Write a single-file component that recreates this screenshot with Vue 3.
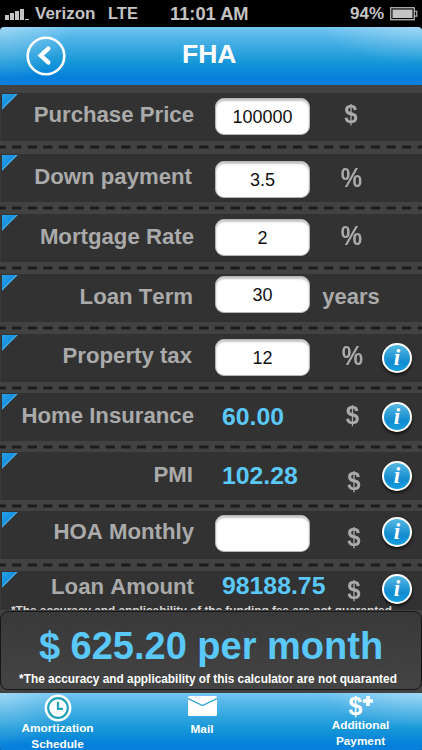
<template>
  <div class="screen">
    <div class="status-bar">
      <div class="signal">
        <i v-for="h in signalBars" :key="h" :style="{ height: h + 'px' }"></i>
        <i class="off"></i>
      </div>
      <span class="carrier">Verizon</span>
      <span class="network">LTE</span>
      <span class="clock">11:01 AM</span>
      <span class="battery-text">94%</span>
      <svg class="battery" width="28" height="14" viewBox="0 0 28 14">
        <rect x="0.75" y="0.75" width="23.5" height="12" fill="none" stroke="#c4c4c4" stroke-width="1.2" />
        <rect x="2.5" y="2.5" width="20" height="8.5" fill="#c4c4c4" />
        <path d="M24.5 4.3h2.3v4.8h-2.3" fill="none" stroke="#c4c4c4" stroke-width="1.1" />
      </svg>
    </div>

    <header class="header">
      <button class="back-btn">
        <svg width="40" height="40" viewBox="0 0 40 40">
          <circle cx="20" cy="20" r="18.3" fill="none" stroke="#fff" stroke-width="2.6" />
          <path d="M22.3 12.6L14.8 19.5l7.5 6.9" fill="none" stroke="#fff" stroke-width="4.4" stroke-linecap="round" />
        </svg>
      </button>
      <h1>FHA</h1>
    </header>

    <main class="rows">
      <div
        v-for="row in rows"
        :key="row.label"
        class="row"
        :style="{ height: row.height + 'px' }"
      >
        <div class="panel">
          <span class="corner"></span>
          <label :style="{ marginTop: row.labelTop + 'px', paddingRight: (row.inset || 0) + 'px' }">{{ row.label }}</label>
          <div class="field" :style="{ marginTop: row.fieldTop + 'px' }">
            <span v-if="row.value" class="value">{{ row.value }}</span>
            <input v-else v-model="row.input" type="text" />
          </div>
          <span
            class="unit"
            :class="{ years: row.unit === 'years', percent: row.unit === '%' }"
            :style="{ marginTop: row.unitTop + 'px', paddingLeft: (row.unitShift || 0) + 'px' }"
          >{{ row.unit }}</span>
          <button v-if="row.infoTop !== undefined" class="info" :style="{ marginTop: row.infoTop + 'px' }">i</button>
        </div>
        <svg class="stitch" width="422" height="4">
          <line x1="-3.5" y1="2" x2="422" y2="2" />
        </svg>
      </div>
      <p class="funding-note">*The accuracy and applicability of the funding fee are not quaranted</p>
    </main>

    <section class="summary">
      <div class="summary-box">
        <svg class="grain" width="422" height="78">
          <filter id="grain">
            <feTurbulence type="fractalNoise" baseFrequency="0.7" numOctaves="2" />
            <feColorMatrix type="saturate" values="0" />
          </filter>
          <rect width="100%" height="100%" filter="url(#grain)" />
        </svg>
        <strong>$ 625.20 per month</strong>
        <p>*The accuracy and applicability of this calculator are not quaranted</p>
      </div>
    </section>

    <nav class="tabs">
      <a class="tab amortization">
        <svg width="28" height="28" viewBox="0 0 28 28">
          <circle cx="14" cy="14" r="13.4" fill="#fff" />
          <circle cx="14" cy="14" r="9.8" fill="none" stroke="#20a3b8" stroke-width="2.2" />
          <path d="M14 7.8v7h5" fill="none" stroke="#20a3b8" stroke-width="2.2" />
        </svg>
        <span>Amortization<br />Schedule</span>
      </a>
      <a class="tab mail">
        <svg width="29" height="20" viewBox="0 0 29 20">
          <rect width="29" height="20" rx="1.5" fill="#fff" />
          <path d="M0 2.5l14.5 7L29 2.5" fill="none" stroke="#2ba0d0" stroke-width="1.2" />
        </svg>
        <span>Mail</span>
      </a>
      <a class="tab additional">
        <span class="dollar">$
          <svg width="10" height="10" viewBox="0 0 10 10">
            <path d="M5 0v10M0 5h10" stroke="#fff" stroke-width="3.6" />
          </svg>
        </span>
        <span>Additional<br />Payment</span>
      </a>
    </nav>
  </div>
</template>

<script setup>
import { ref } from "vue";

const signalBars = [5, 7, 9, 11];

const rows = ref([
  { label: "Purchase Price", input: "100000", unit: "$", height: 61, labelTop: 9, fieldTop: 5, unitTop: 6 },
  { label: "Down payment", input: "3.5", unit: "%", height: 60, labelTop: 10, fieldTop: 7, unitTop: 9, unitShift: 1, inset: 2 },
  { label: "Mortgage Rate", input: "2", unit: "%", height: 60, labelTop: 10, fieldTop: 5, unitTop: 7, unitShift: 1 },
  { label: "Loan Term", input: "30", unit: "years", height: 60, labelTop: 10, fieldTop: 2, unitTop: 10, inset: 1 },
  { label: "Property tax", input: "12", unit: "%", height: 59, labelTop: 9, fieldTop: 5, unitTop: 7, unitShift: 3, infoTop: 9, inset: 2 },
  { label: "Home Insurance", value: "60.00", unit: "$", height: 59, labelTop: 10, fieldTop: 5, unitTop: 7, unitShift: 3, infoTop: 9 },
  { label: "PMI", value: "102.28", unit: "$", height: 59, labelTop: 10, fieldTop: 5, unitTop: 14, unitShift: 6, infoTop: 9, inset: 1 },
  { label: "HOA Monthly", input: "", unit: "$", height: 60, labelTop: 8, fieldTop: 4, unitTop: 11, unitShift: 6, infoTop: 6 },
  { label: "Loan Amount", value: "98188.75", unit: "$", height: 60, labelTop: 3, fieldTop: -4, unitTop: 4, unitShift: 6, infoTop: 3 },
]);
</script>

<style>
body {
  background: #000;
}
</style>

<style scoped>
.screen {
  width: 422px;
  height: 750px;
  display: flex;
  flex-direction: column;
  overflow: hidden;
  background: #000;
  font-family: "Liberation Sans", Arial, Helvetica, sans-serif;
}

button {
  padding: 0;
  border: none;
  background: none;
}

.status-bar {
  display: grid;
  grid-template-columns: 30px 73px 62px 180px 40px 28px;
  align-items: center;
  flex: none;
  height: 27px;
  padding-left: 5px;
  box-sizing: border-box;
  color: #c4c4c4;
  font-size: 17px;
  font-weight: bold;
  line-height: 27px;
  white-space: nowrap;
}

.signal {
  display: flex;
  align-items: flex-end;
  gap: 1px;
  height: 11px;
  margin-top: 2px;
}

.signal i {
  width: 4px;
  background: #c4c4c4;
}

.signal .off {
  height: 1px;
}

.network {
  font-size: 16.5px;
}

.clock {
  font-size: 18.3px;
}

.header {
  position: relative;
  display: flex;
  flex: none;
  height: 58px;
  border-radius: 4px 4px 0 0;
  background:
    radial-gradient(ellipse 70px 56px at 0 0, rgba(255, 255, 255, 0.32), transparent),
    radial-gradient(ellipse 100px 36px at 100% 0, rgba(255, 255, 255, 0.32), transparent),
    linear-gradient(#74c6f2 0%, #4bb2e6 22%, #1798d8 60%, #047fdb 88%, #0780dc 100%);
}

.back-btn {
  width: 40px;
  height: 40px;
  margin: 9px 0 0 26px;
}

.header h1 {
  margin: 9px 0 0 116px;
  color: #fff;
  font-size: 26.5px;
  line-height: 36px;
}

.rows {
  flex: none;
  height: 525px;
  padding-top: 8px;
  box-sizing: border-box;
  overflow: hidden;
  background: #424242;
  position: relative;
}

.panel {
  position: relative;
  display: grid;
  grid-template-columns: 194px 21px 95px 72px 30px;
  align-items: start;
  height: 48px;
  background: #323232;
  border-left: 1px solid #3a3a3a;
  box-sizing: border-box;
}

.corner {
  position: absolute;
  left: 1px;
  top: 1px;
  width: 16px;
  height: 16px;
  background: linear-gradient(135deg, #2aa0e6, #1591de 42%, #4fb4ec 46%, #3a86b8 50%);
  clip-path: polygon(0 0, 100% 0, 0 100%);
}

.row label {
  grid-column: 1;
  margin-left: -10px;
  padding-left: 0;
  position: relative;
  left: -1px;
  color: #aaa;
  font-size: 22.2px;
  font-weight: bold;
  font-kerning: none;
  line-height: 26px;
  text-align: right;
  white-space: nowrap;
}

.field {
  grid-column: 3;
  margin-left: -1px;
}

.field input {
  display: block;
  width: 95px;
  height: 37px;
  padding: 1px 0 0;
  box-sizing: border-box;
  border: 1px solid #b5b5b5;
  border-radius: 9px;
  background: #fff;
  box-shadow: inset 0 2px 2px #c4c4c4;
  color: #111;
  font-family: inherit;
  font-size: 18px;
  text-align: center;
  outline: none;
}

.value {
  display: block;
  padding-left: 7px;
  color: #5ac8f8;
  font-size: 24.8px;
  font-weight: bold;
  line-height: 38px;
}

.unit {
  grid-column: 4;
  width: 80px;
  box-sizing: border-box;
  color: #aaa;
  font-size: 24px;
  font-weight: bold;
  line-height: 30px;
  text-align: center;
  transform: scaleY(1.08);
}

.unit.percent {
  transform: scaleY(1.16);
}

.unit.years {
  padding-left: 3px;
  font-size: 22px;
  line-height: 26px;
  transform: none;
}

.info {
  grid-column: 5;
  width: 30px;
  height: 30px;
  margin-left: -1px;
  box-sizing: border-box;
  border: 2.5px solid #fff;
  border-radius: 50%;
  background: linear-gradient(#56b8e2, #118bd0 65%, #16a0df);
  box-shadow: 0 2px 3px #111;
  color: #fff;
  font: italic bold 23px/24px "Liberation Serif", "Times New Roman", serif;
  text-align: center;
}

.stitch {
  display: block;
  margin-top: 4px;
}

.stitch line {
  stroke: #1c1c1c;
  stroke-width: 3;
  stroke-dasharray: 9.2 6.4;
}

.funding-note {
  position: absolute;
  left: 11px;
  top: 519px;
  margin: 0;
  color: #d8d8d8;
  font-size: 11.8px;
  font-weight: bold;
  line-height: 13px;
  white-space: nowrap;
}

.summary {
  flex: none;
  height: 83px;
  padding-top: 1px;
  box-sizing: border-box;
  background: #424242;
}

.summary-box {
  position: relative;
  height: 79px;
  box-sizing: border-box;
  overflow: hidden;
  border: 1.5px solid #171717;
  border-radius: 8px;
  background: linear-gradient(#343434, #404040);
  text-align: center;
}

.grain {
  position: absolute;
  left: 0;
  top: 0;
  opacity: 0.08;
}

.summary-box strong {
  position: relative;
  display: block;
  padding-top: 12px;
  color: #5ac8f8;
  font-size: 38px;
  line-height: 44px;
  white-space: nowrap;
}

.summary-box p {
  position: relative;
  margin: 4px 0 0 -6px;
  color: #fff;
  font-size: 11.85px;
  font-weight: bold;
  line-height: 14px;
  white-space: nowrap;
}

.tabs {
  display: flex;
  justify-content: space-between;
  flex: 1;
  border-radius: 0 0 4px 4px;
  background:
    radial-gradient(ellipse 70px 56px at 0 0, rgba(255, 255, 255, 0.32), transparent),
    radial-gradient(ellipse 100px 36px at 100% 0, rgba(255, 255, 255, 0.32), transparent),
    linear-gradient(#74c6f2 0%, #4bb2e6 22%, #1798d8 60%, #047fdb 88%, #0780dc 100%);
}

.tab {
  display: flex;
  flex-direction: column;
  align-items: center;
  width: 115px;
  color: #fff;
  font-size: 11.8px;
  font-weight: bold;
  line-height: 16px;
  text-align: center;
}

.amortization svg {
  margin-top: 1px;
}

.amortization span {
  margin-top: -2px;
}

.mail {
  margin-right: 14px;
}

.mail svg {
  margin-top: 3px;
}

.mail span {
  margin-top: 5px;
}

.additional {
  margin-right: 4px;
}

.dollar {
  position: relative;
  height: 24px;
  margin-left: -10px;
  font-size: 25px;
  line-height: 27px;
}

.dollar svg {
  position: absolute;
  left: 14px;
  top: 3px;
}
</style>
